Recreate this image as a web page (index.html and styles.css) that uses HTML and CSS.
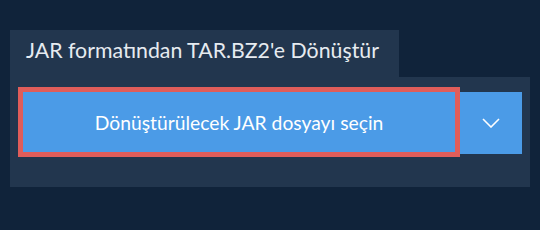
FILE: index.html
```html
<!DOCTYPE html>
<html lang="tr">
<head>
<meta charset="utf-8">
<link rel="stylesheet" href="styles.css">
</head>
<body>
<div class="wrap">
  <div class="tab">JAR formatından TAR.BZ2'e Dönüştür</div>
  <div class="panel">
    <div class="row">
      <button class="pick">Dönüştürülecek JAR dosyayı seçin</button>
      <button class="more" aria-label="more">
        <svg width="18" height="10" viewBox="0 0 18 10"><path d="M1 1 L9 9 L17 1" fill="none" stroke="#fff" stroke-width="1.6"/></svg>
      </button>
    </div>
  </div>
</div>
</body>
</html>
```
FILE: styles.css
```css
html, body {
  margin: 0;
  background: #10233a;
  font-family: Lato, "Noto Sans", sans-serif;
}
.wrap {
  padding: 30px 0 0 10px;
}
.tab {
  display: inline-block;
  box-sizing: border-box;
  height: 47px;
  width: 389px;
  padding: 0 16px;
  line-height: 41px;
  background: #22364e;
  color: #e6ebf0;
  font-size: 21.3px;
  white-space: nowrap;
}
.panel {
  width: 520px;
  height: 110px;
  box-sizing: border-box;
  background: #22364e;
  padding: 15px 8px 0 13px;
}
.row {
  display: flex;
  align-items: flex-start;
}
button {
  border: 0;
  margin: 0;
  padding: 0;
  background: #4b9be7;
  color: #fff;
  font-family: inherit;
  cursor: pointer;
}
.pick {
  width: 432px;
  height: 60px;
  outline: 5px solid #e05d5a;
  font-size: 19.3px;
}
.more {
  width: 62px;
  height: 62px;
  margin-left: 5px;
  display: flex;
  align-items: center;
  justify-content: center;
}
.more svg {
  display: block;
}
```
